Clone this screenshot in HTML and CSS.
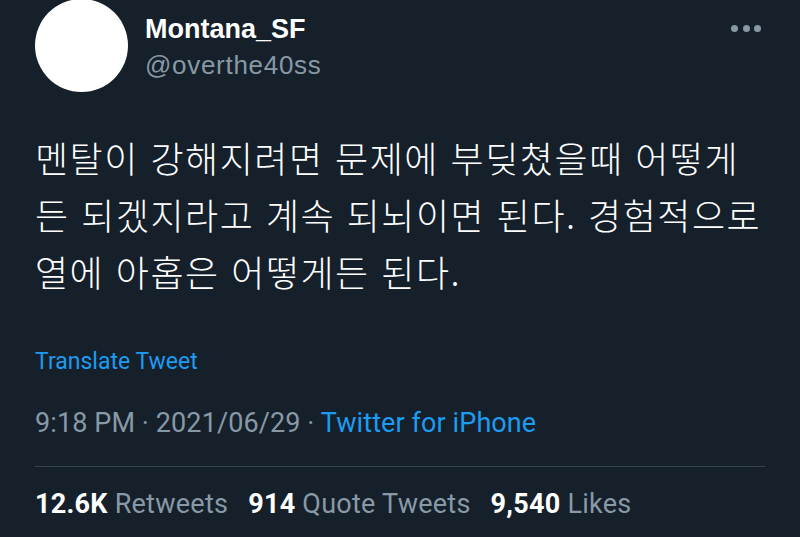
FILE: index.html
```html
<!DOCTYPE html>
<html lang="ko">
<head>
    <meta charset="UTF-8">
    <meta name="viewport" content="width=device-width, initial-scale=1.0">
    <title>Montana_SF Tweet</title>
    <link rel="stylesheet" href="styles.css">
</head>
<body>
    <main class="tweet">
        <header class="tweet-head">
            <div class="avatar"></div>
            <div class="author">
                <p class="name">Montana_SF</p>
                <p class="handle">@overthe40ss</p>
            </div>
            <div class="more">
                <span></span><span></span><span></span>
            </div>
        </header>

        <p class="tweet-text">멘탈이 강해지려면 문제에 부딪쳤을때 어떻게<br>든 되겠지라고 계속 되뇌이면 된다. 경험적으로<br>열에 아홉은 어떻게든 된다.</p>

        <a class="translate" href="#">Translate Tweet</a>

        <p class="meta">9:18 PM · 2021/06/29 · <a href="#">Twitter for iPhone</a></p>

        <div class="stats">
            <span><b>12.6K</b> Retweets</span>
            <span><b>914</b> Quote Tweets</span>
            <span><b>9,540</b> Likes</span>
        </div>
    </main>
</body>
</html>
```

FILE: styles.css
```css
/* General styles */
body {
    margin: 0;
    padding: 0;
    background-color: #15202b;
    color: #ffffff;
    font-family: Roboto, "Liberation Sans", "Noto Sans CJK KR", sans-serif;
    overflow: hidden;
}

p {
    margin: 0;
}

a {
    color: #1d9bf0;
    text-decoration: none;
}

.tweet {
    padding: 0 35px;
}

/* Header: avatar, name, menu */
.tweet-head {
    display: flex;
    align-items: flex-start;
    height: 92px;
}

.avatar {
    width: 93px;
    height: 93px;
    margin-top: -1px;
    border-radius: 50%;
    background: #ffffff;
    flex-shrink: 0;
}

.author {
    margin-left: 17px;
    padding-top: 14px;
    flex: 1;
}

.name {
    font-family: "Liberation Sans", Arial, sans-serif;
    font-weight: bold;
    font-size: 27px;
    line-height: 30px;
}

.handle {
    font-family: "Liberation Sans", Arial, sans-serif;
    color: #8899a6;
    font-size: 26px;
    line-height: 30px;
    letter-spacing: 0.7px;
    margin-top: 6px;
}

.more {
    display: flex;
    gap: 4.5px;
    padding-top: 25px;
    margin-right: 4px;
}

.more span {
    width: 7px;
    height: 7px;
    border-radius: 50%;
    background: #8899a6;
}

/* Tweet body */
.tweet-text {
    margin-top: 37px;
    font-family: "Noto Sans CJK KR", sans-serif;
    font-weight: 300;
    font-size: 36px;
    line-height: 57px;
    letter-spacing: 1.5px;
    white-space: nowrap;
}

.translate {
    display: block;
    margin-top: 48px;
    font-size: 23px;
    line-height: 28px;
}

.meta {
    margin-top: 31px;
    color: #8899a6;
    font-size: 27px;
    line-height: 32px;
    letter-spacing: 0.1px;
}

/* Stats row */
.stats {
    display: flex;
    gap: 20px;
    margin-top: 27px;
    padding-top: 21px;
    border-top: 1px solid #38444d;
    color: #8899a6;
    font-size: 27px;
    line-height: 32px;
    letter-spacing: 0.25px;
}

.stats b {
    color: #ffffff;
}
```
